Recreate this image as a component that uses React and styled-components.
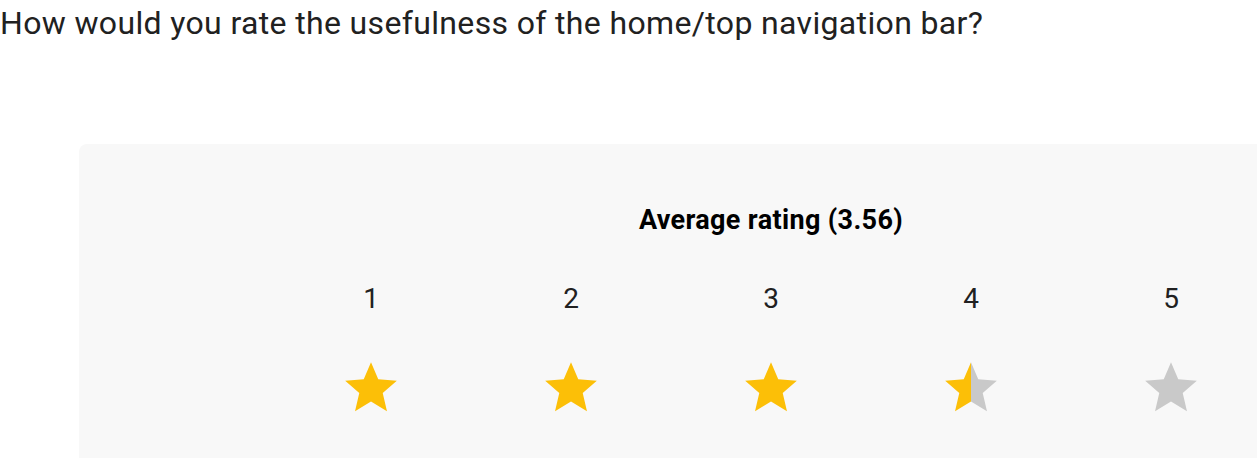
import styled, { createGlobalStyle } from "styled-components";

const GlobalStyle = createGlobalStyle`
  html, body {
    margin: 0;
    padding: 0;
    background: #ffffff;
    overflow: hidden;
  }
  body {
    font-family: Roboto, "Liberation Sans", sans-serif;
    color: #212121;
  }
`;

const Page = styled.div`
  width: 1257px;
  height: 458px;
  overflow: hidden;
`;

const Question = styled.h2`
  margin: 4px 0 0 0;
  height: 38px;
  font-size: 32px;
  font-weight: 400;
  letter-spacing: 0.35px;
  line-height: 38px;
  color: #212121;
  white-space: nowrap;
`;

const Panel = styled.div`
  margin: 102px 0 0 79px;
  width: 1384px;
  min-height: 360px;
  box-sizing: border-box;
  padding-top: 60px;
  background: #f8f8f8;
  border-radius: 8px;
  display: flex;
  flex-direction: column;
  align-items: center;
`;

const Heading = styled.div`
  font-size: 27px;
  font-weight: 700;
  letter-spacing: 0.35px;
  line-height: 32px;
  color: #000000;
`;

const Scale = styled.div`
  margin-top: 46px;
  display: grid;
  grid-template-columns: repeat(5, 200px);
`;

const Column = styled.div`
  display: flex;
  flex-direction: column;
  align-items: center;
`;

const Label = styled.div`
  font-size: 28px;
  line-height: 33px;
  color: #212121;
`;

const StarSvg = styled.svg`
  margin-top: 42px;
  width: 62px;
  height: 62px;
  display: block;
`;

const YELLOW = "#fcbf07";
const GRAY = "#c9c9c9";
const STAR_PATH =
  "M12 17.27L18.18 21l-1.64-7.03L22 9.24l-7.19-.61L12 2 9.19 8.63 2 9.24l5.46 4.73L5.82 21z";

function Star({ fill, id }) {
  // fill: 0..1 share of the star painted yellow
  const pct = `${Math.round(fill * 100)}%`;
  return (
    <StarSvg viewBox="0 0 24 24">
      <defs>
        <linearGradient id={id} x1="2" x2="22" y1="0" y2="0" gradientUnits="userSpaceOnUse">
          <stop offset={pct} stopColor={YELLOW} />
          <stop offset={pct} stopColor={GRAY} />
        </linearGradient>
      </defs>
      <path d={STAR_PATH} fill={`url(#${id})`} />
    </StarSvg>
  );
}

const average = 3.56;

export default function App() {
  const ratings = [1, 2, 3, 4, 5];
  return (
    <Page>
      <GlobalStyle />
      <Question>How would you rate the usefulness of the home/top navigation bar?</Question>
      <Panel>
        <Heading>Average rating ({average})</Heading>
        <Scale>
          {ratings.map((r) => {
            const fill = r <= Math.floor(average) ? 1 : r - 1 < average ? 0.5 : 0;
            return (
              <Column key={r}>
                <Label>{r}</Label>
                <Star fill={fill} id={`star-${r}`} />
              </Column>
            );
          })}
        </Scale>
      </Panel>
    </Page>
  );
}
